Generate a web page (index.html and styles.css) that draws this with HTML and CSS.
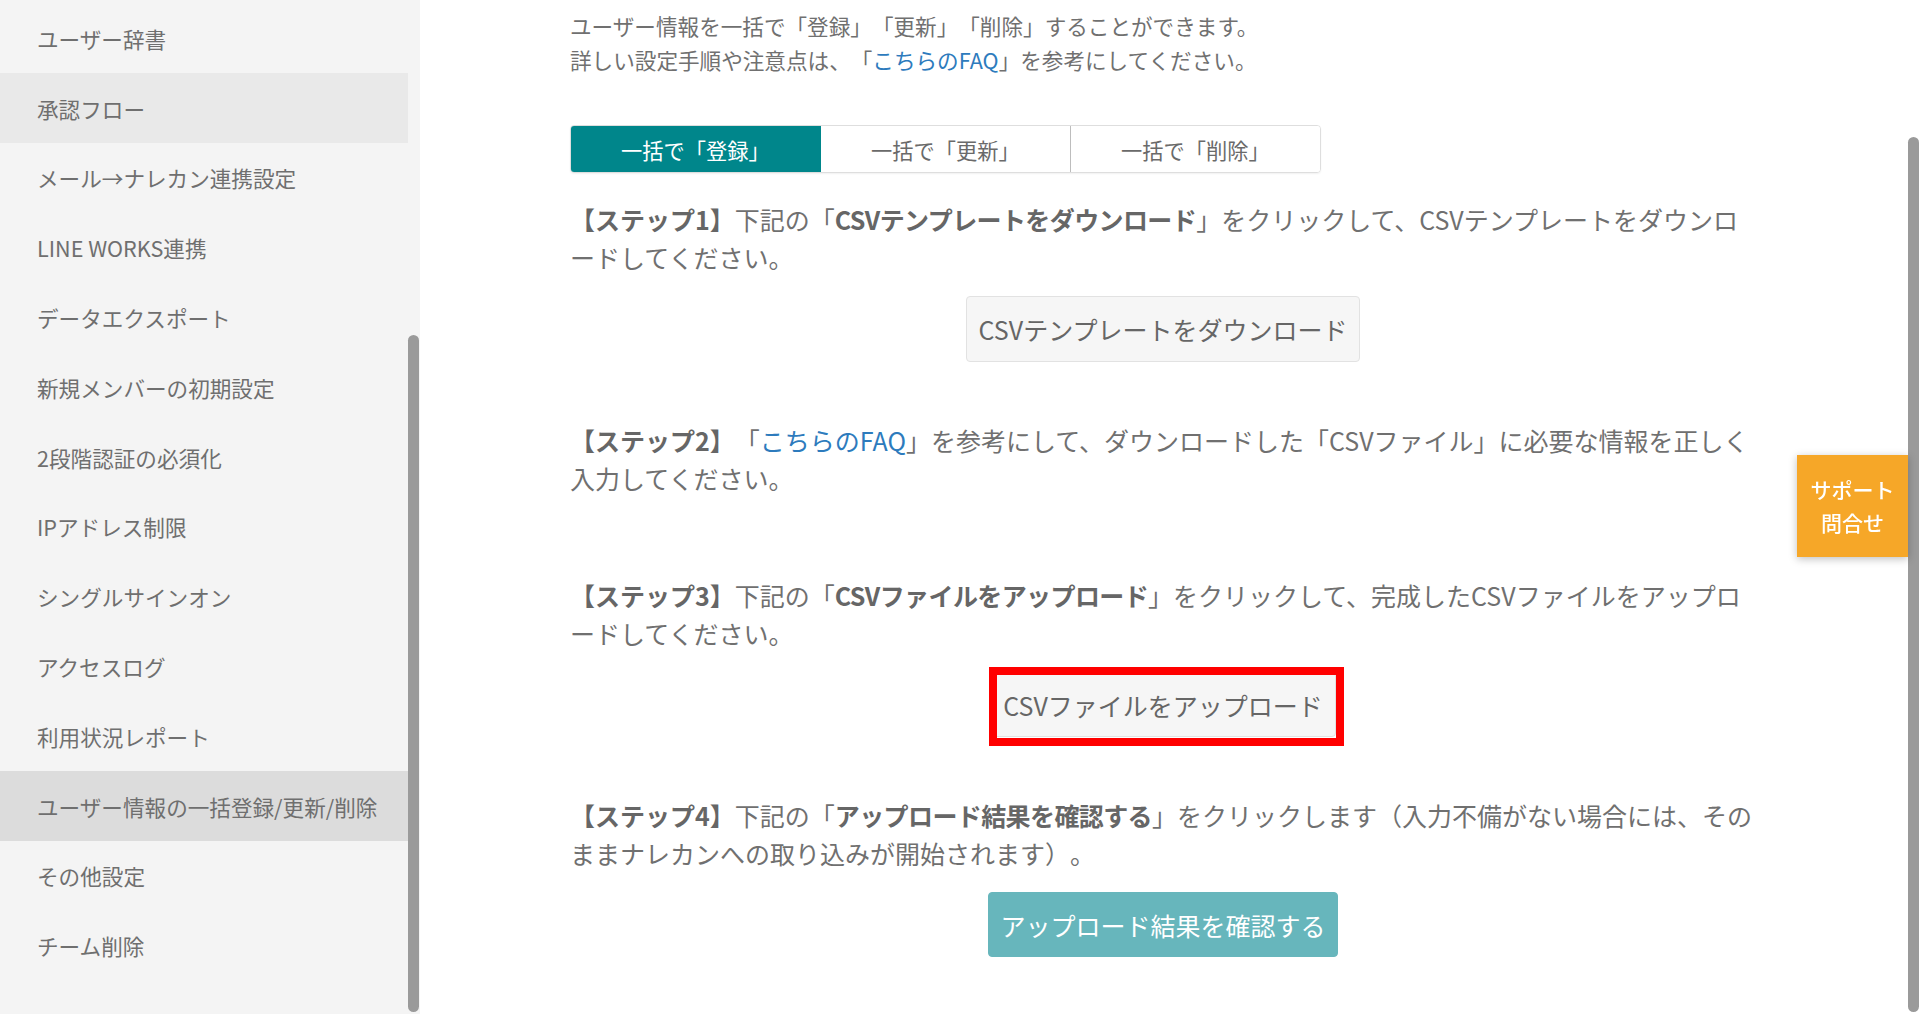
FILE: index.html
```html
<!DOCTYPE html>
<html lang="ja">
<head>
    <meta charset="UTF-8">
    <meta name="viewport" content="width=device-width, initial-scale=1.0">
    <title>ユーザー情報の一括登録/更新/削除</title>
    <link rel="stylesheet" href="styles.css">
</head>
<body>
    <!-- Settings menu -->
    <nav class="sidebar">
        <ul class="side-menu">
            <li class="side-item">ユーザー辞書</li>
            <li class="side-item hover">承認フロー</li>
            <li class="side-item">メール→ナレカン連携設定</li>
            <li class="side-item">LINE WORKS連携</li>
            <li class="side-item">データエクスポート</li>
            <li class="side-item">新規メンバーの初期設定</li>
            <li class="side-item">2段階認証の必須化</li>
            <li class="side-item">IPアドレス制限</li>
            <li class="side-item">シングルサインオン</li>
            <li class="side-item">アクセスログ</li>
            <li class="side-item">利用状況レポート</li>
            <li class="side-item active">ユーザー情報の一括登録/更新/削除</li>
            <li class="side-item">その他設定</li>
            <li class="side-item">チーム削除</li>
        </ul>
        <div class="side-track"><div class="side-thumb"></div></div>
    </nav>

    <main class="main">
        <div class="content">
            <div class="intro">
                <p>ユーザー情報を一括で「登録」「更新」「削除」することができます。</p>
                <p>詳しい設定手順や注意点は、「<a href="#" class="link">こちらのFAQ</a>」を参考にしてください。</p>
            </div>

            <div class="tabs">
                <button class="tab active">一括で「登録」</button>
                <button class="tab">一括で「更新」</button>
                <button class="tab">一括で「削除」</button>
            </div>

            <div class="step first">
                <p class="step-text"><b>【ステップ1】</b>下記の「<b class="em">CSVテンプレートをダウンロード</b>」をクリックして、CSVテンプレートをダウンロードしてください。</p>
                <div class="step-action">
                    <button class="btn">CSVテンプレートをダウンロード</button>
                </div>
            </div>

            <div class="step no-action">
                <p class="step-text"><b>【ステップ2】</b>「<a href="#" class="link">こちらのFAQ</a>」を参考にして、ダウンロードした「CSVファイル」に必要な情報を正しく入力してください。</p>
            </div>

            <div class="step">
                <p class="step-text"><b>【ステップ3】</b>下記の「<b class="em">CSVファイルをアップロード</b>」をクリックして、完成したCSVファイルをアップロードしてください。</p>
                <div class="step-action">
                    <span class="marked"><button class="btn">CSVファイルをアップロード</button></span>
                </div>
            </div>

            <div class="step">
                <p class="step-text"><b>【ステップ4】</b>下記の「<b class="em">アップロード結果を確認する</b>」をクリックします（入力不備がない場合には、そのままナレカンへの取り込みが開始されます）。</p>
                <div class="step-action">
                    <button class="btn primary" disabled>アップロード結果を確認する</button>
                </div>
            </div>
        </div>
        <div class="page-track"><div class="page-thumb"></div></div>
    </main>

    <!-- Support tab -->
    <div class="support">サポート<br>問合せ</div>
</body>
</html>
```

FILE: styles.css
```css
/* Global Styles */
body {
    margin: 0;
    height: 100vh;
    overflow: hidden;
    display: flex;
    font-family: "Noto Sans CJK JP", "Noto Sans", sans-serif;
    color: #707070;
    background: #fff;
    text-spacing-trim: space-all;
}

p {
    margin: 0;
}

button {
    font-family: inherit;
}

.link {
    color: #2d7bbd;
    text-decoration: none;
}

/* Sidebar */
.sidebar {
    width: 420px;
    height: 100vh;
    display: flex;
    background: #f4f4f4;
}

.side-menu {
    width: 408px;
    margin: 0;
    padding: 3.5px 0 0;
    list-style: none;
}

.side-item {
    height: 69.8px;
    display: flex;
    align-items: center;
    padding-left: 37px;
    font-size: 21.6px;
    color: #6f6f6f;
}

.side-item.hover {
    background: #e9e9e9;
}

.side-item.active {
    background: #dcdcdc;
}

.side-track {
    width: 11px;
    padding-top: 335px;
}

.side-thumb {
    height: 677px;
    background: #9a9a9a;
    border-radius: 6px;
}

/* Main */
.main {
    flex: 1;
    display: flex;
    justify-content: space-between;
}

.content {
    width: 1186px;
    margin-left: 150px;
    padding-top: 9px;
}

.intro {
    font-size: 21.6px;
    line-height: 34px;
}

.tabs {
    display: flex;
    margin-top: 48px;
    width: 749px;
    border: 1px solid #dedede;
    border-radius: 4px;
    overflow: hidden;
    box-shadow: 0 1px 2px rgba(0, 0, 0, 0.06);
}

.tab {
    flex: 1;
    height: 46px;
    border: none;
    border-left: 1px solid #bdbdbd;
    background: #fff;
    color: #6a6a6a;
    font-size: 21.25px;
    padding: 0;
}

.tab:first-child {
    border-left: none;
}

.tab.active {
    background: #00868b;
    color: #fff;
}

.tab.active + .tab {
    border-left-color: #00868b;
}

.step {
    margin-top: 60px;
}

.step.first {
    margin-top: 28px;
}

.step.no-action {
    padding-bottom: 20px;
}

.step-text {
    font-size: 25px;
    line-height: 37.5px;
    line-break: loose;
}

.step-text b {
    color: #666;
    font-weight: 700;
}

.step-text .em {
    letter-spacing: -0.6px;
}

.step-action {
    margin-top: 20px;
    text-align: center;
}

.btn {
    height: 66px;
    padding: 0 12px;
    font-size: 25px;
    color: #666;
    background: #f6f6f6;
    border: 1px solid #e2e2e2;
    border-radius: 4px;
    vertical-align: top;
}

/* red frame drawn over the upload button */
.marked {
    position: relative;
    display: inline-block;
}

.marked::after {
    content: "";
    position: absolute;
    top: -5px;
    left: -1px;
    right: -8px;
    bottom: -9px;
    border: 8px solid #ff0000;
}

.marked .btn {
    height: 65px;
}

.btn.primary {
    height: 65px;
    padding: 0 11px;
    color: #fff;
    background: #67b6bc;
    border-color: #67b6bc;
}

.page-track {
    width: 11px;
    padding-top: 137px;
}

.page-thumb {
    height: 875px;
    background: #9a9a9a;
    border-radius: 6px;
}

/* Support tab */
.support {
    position: fixed;
    top: 455px;
    right: 11px;
    width: 111px;
    height: 102px;
    display: flex;
    align-items: center;
    justify-content: center;
    text-align: center;
    background: #f6a728;
    color: #fff;
    font-size: 21px;
    font-weight: 500;
    line-height: 33px;
    box-shadow: 0 2px 8px rgba(0, 0, 0, 0.25);
}
```
